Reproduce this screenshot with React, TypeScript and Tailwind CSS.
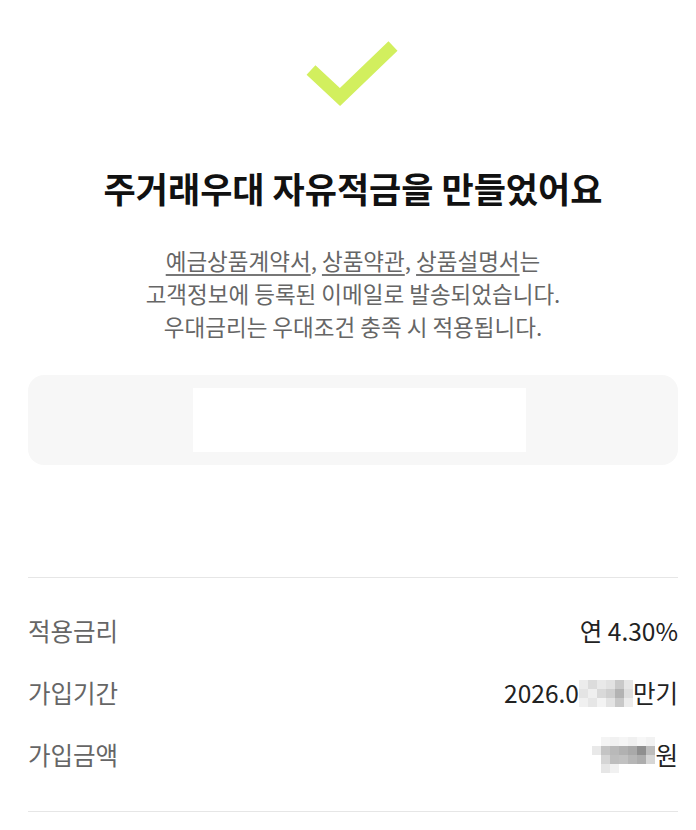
import React from 'react';

const font = { fontFamily: '"Noto Sans CJK KR", "Noto Sans", sans-serif' };

// 가려진 영역 (모자이크)
function Mosaic({ cells, size }: { cells: string[][]; size: number }) {
  return (
    <div className="flex flex-col">
      {cells.map((row, i) => (
        <div key={i} className="flex">
          {row.map((c, j) => (
            <div key={j} style={{ width: size, height: size, background: c }} />
          ))}
        </div>
      ))}
    </div>
  );
}

const dateCells = [
  ['#ececec', '#dcdcdc', '#e9e9e9', '#e2e2e2', '#c9c9c9', '#e6e6e6'],
  ['#e4e4e4', '#efefef', '#d9d9d9', '#cfcfcf', '#b3b3b3', '#dedede'],
  ['#f0f0f0', '#e6e6e6', '#f3f3f3', '#e3e3e3', '#c8c8c8', '#ececec'],
];

const amountCells = [
  ['#ffffff', '#f4f4f4', '#f1f1f1', '#f5f5f5', '#f0f0f0', '#f7f7f7', '#f2f2f2'],
  ['#e9e9e9', '#c4c4c4', '#b9b9b9', '#b1b1b1', '#a9a9a9', '#8f8f8f', '#bdbdbd'],
  ['#ffffff', '#d5d5d5', '#bebebe', '#c1c1c1', '#b6b6b6', '#adadad', '#d6d6d6'],
  ['#ffffff', '#e6e6e6', '#f1f1f1', '#ffffff', '#ffffff', '#ffffff', '#ffffff'],
];

export default function App() {
  return (
    <div className="min-h-[830px] bg-white pl-7 pr-[18px] flex flex-col" style={font}>
      <div className="flex justify-center pt-[35px]">
        <svg width="100" height="75" viewBox="0 0 100 75">
          <polyline
            points="8,35 37,62 90,11"
            fill="none"
            stroke="#d2ef5e"
            strokeWidth="13"
            strokeLinejoin="miter"
          />
        </svg>
      </div>

      <h1 className="mt-[56px] text-center text-[35px] leading-[44px] font-bold text-[#111]">
        주거래우대 자유적금을 만들었어요
      </h1>

      <p className="mt-[34px] text-center text-[22.5px] leading-[33px] text-[#666]">
        <span className="underline underline-offset-4 decoration-[#777]">예금상품계약서</span>,{' '}
        <span className="underline underline-offset-4 decoration-[#777]">상품약관</span>,{' '}
        <span className="underline underline-offset-4 decoration-[#777]">상품설명서</span>는
        <br />
        고객정보에 등록된 이메일로 발송되었습니다.
        <br />
        우대금리는 우대조건 충족 시 적용됩니다.
      </p>

      <div className="mt-[32px] h-[90px] rounded-2xl bg-[#f7f7f7] flex items-center justify-center pl-3">
        <div className="w-[333px] h-[64px] bg-white" />
      </div>

      <div className="mt-[112px] border-t border-[#e6e6e6]" />

      <div className="pt-[37px] pb-[40px] flex flex-col gap-[30px] text-[24.5px]">
        <div className="flex justify-between items-center h-[32px]">
          <span className="text-[#666]">적용금리</span>
          <span className="text-[#222]">연 4.30%</span>
        </div>
        <div className="flex justify-between items-center h-[32px]">
          <span className="text-[#666]">가입기간</span>
          <span className="flex items-center text-[#222]">
            2026.0
            <Mosaic cells={dateCells} size={9} />
            만기
          </span>
        </div>
        <div className="flex justify-between items-center h-[32px]">
          <span className="text-[#666]">가입금액</span>
          <span className="flex items-center text-[#222]">
            <Mosaic cells={amountCells} size={9} />
            원
          </span>
        </div>
      </div>

      <div className="border-t border-[#e6e6e6]" />
    </div>
  );
}
